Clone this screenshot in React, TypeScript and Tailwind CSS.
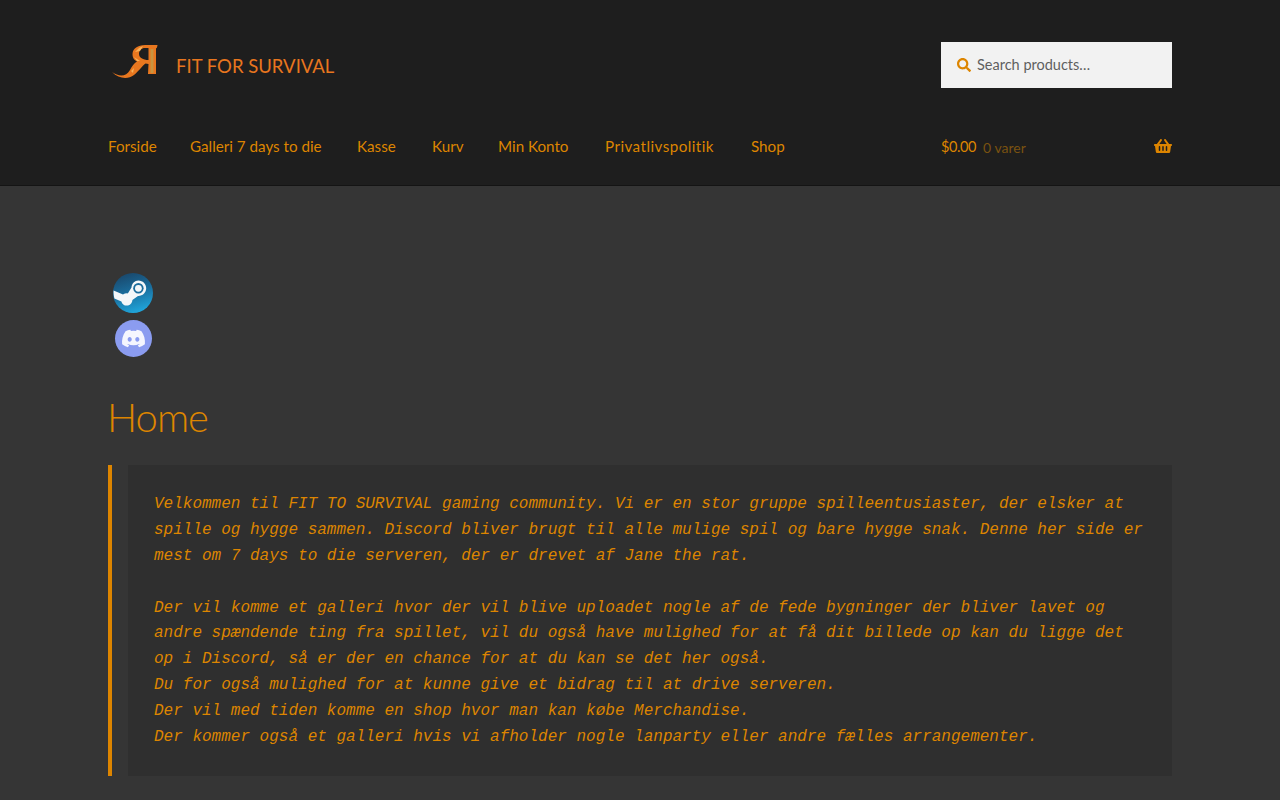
import { FaDiscord, FaSearch, FaShoppingBasket } from "react-icons/fa";

const menu = [
  { label: "Forside", className: "w-[82px]" },
  { label: "Galleri 7 days to die", className: "w-[167px]" },
  { label: "Kasse", className: "w-[75px]" },
  { label: "Kurv", className: "w-[66px]" },
  { label: "Min Konto", className: "w-[107px]" },
  { label: "Privatlivspolitik", className: "w-[146px] tracking-[0.45px]" },
  { label: "Shop", className: "" },
];

function Logo() {
  return (
    <div className="flex items-start w-[230px] h-[40px]">
      <svg width="48" height="38" viewBox="0 0 48 38" className="shrink-0">
        <path d="M0 28 C7 33 14 33 18 26 C20 22 22 19.5 25 17.5 C21.5 16 20.5 13 20.5 10 C20.5 4.5 26 1 33 1 L45.5 1 L45 3.5 L44 4.5 L44 30 L36 30 L36.5 20 L33.5 19.5 C30 22 27 27 22 31 C16 35.5 7 35 0 28 Z M36.5 4 L33 4 C29.5 4 27 6.5 27 10 C27 13.5 31 16 36.5 16 Z" fill="#e8771f" fillRule="evenodd" />
        <path d="M38.5 5 L41.5 5 L41.5 29 L38.5 29 Z" fill="#c9943f" />
        <path d="M23 8 L27 4 L31 2 L28 7 Z M22 13 L25 15 L28 17 L25 17 Z M19 27 L22 24 L21 29 Z" fill="#f6b25a" />
      </svg>
      <span className="font-['Lato',sans-serif] text-[18.5px] leading-[24px] text-[#e8761e] whitespace-nowrap ml-[16px] mt-[10px]">
        FIT FOR SURVIVAL
      </span>
    </div>
  );
}

function SteamIcon() {
  return (
    <svg width="40" height="40" viewBox="0 0 40 40" className="block">
      <defs>
        <linearGradient id="steamBg" x1="0.3" y1="0" x2="0.6" y2="1">
          <stop offset="0" stopColor="#19476b" />
          <stop offset="0.5" stopColor="#1a6f9f" />
          <stop offset="1" stopColor="#20a7dc" />
        </linearGradient>
      </defs>
      <circle cx="20" cy="20" r="20" fill="url(#steamBg)" />
      <path d="M0.6 17.5 L10 21.5 C11.5 20.6 13 20.2 14.8 20.4 L18.5 14.5 C18.7 10.3 21.8 7.4 25.4 7.4 C29.8 7.4 33.2 11 33.2 15.3 C33.2 19.8 29.4 23.2 25 23 L19.4 27 C19.2 30.2 16.8 32.6 13.8 32.6 C11 32.6 9 30.8 8.4 28.4 L1.4 25.4 C0.8 23 0.4 20 0.6 17.5 Z" fill="#f4f7f9" />
      <circle cx="25.4" cy="15.3" r="5.2" fill="#1c6d9d" />
      <circle cx="25.4" cy="15.3" r="3.4" fill="#f4f7f9" />
    </svg>
  );
}

function DiscordIcon() {
  return (
    <div className="w-[37px] h-[37px] rounded-full bg-[#8b9cf0] flex items-center justify-center">
      <FaDiscord className="w-[25px] h-[25px] text-[#f5f6fe]" />
    </div>
  );
}

export default function App() {
  return (
    <div className="min-h-[800px] h-[800px] overflow-hidden bg-[#353535] font-['Lato',sans-serif]">
      <header className="h-[186px] bg-[#1e1e1e] border-b border-[#141414]">
        <div className="w-[1064px] mx-auto">
          <div className="flex justify-between pt-[42px]">
            <div className="pl-[4px] pt-[2px]">
              <Logo />
            </div>
            <div className="w-[231px] h-[46px] bg-[#f2f2f2] flex items-center pl-[16px] gap-[6px]">
              <FaSearch className="w-[14px] h-[14px] text-[#dd8500]" />
              <span className="text-[14.5px] text-[#5f5f5f]">Search products…</span>
            </div>
          </div>
          <div className="flex justify-between items-center mt-[45px] h-[28px]">
            <nav className="flex items-center text-[15.2px] text-[#dd8500] -mt-[2px]">
              {menu.map((item) => (
                <span key={item.label} className={item.className}>
                  {item.label}
                </span>
              ))}
            </nav>
            <div className="w-[231px] flex items-center text-[#dd8500]">
              <span className="text-[14.5px] tracking-[-0.4px]">$0.00</span>
              <span className="text-[14px] ml-[7px] text-[#7a5210]">0 varer</span>
              <FaShoppingBasket className="w-[18px] h-[16px] ml-auto -translate-y-[1px]" />
            </div>
          </div>
        </div>
      </header>

      <main className="w-[1064px] mx-auto pt-[87px]">
        <div className="flex flex-col items-start pl-[5px] gap-[7px]">
          <SteamIcon />
          <div className="pl-[1.5px]">
            <DiscordIcon />
          </div>
        </div>
        <h1 className="mt-[34px] -ml-[1px] text-[40px] leading-[52px] tracking-[-1px] font-light text-[#dd8500]">
          Home
        </h1>
        <blockquote className="mt-[22px] border-l-4 border-[#dd8500] pl-[16px]">
          <div className="bg-[#2f2f2f] pl-[26px] pr-[20px] pt-[27px] pb-[25px] font-['Liberation_Mono',monospace] italic text-[16px] leading-[25.888px] text-[#dd8500] whitespace-nowrap">
            Velkommen til FIT TO SURVIVAL gaming community. Vi er en stor gruppe spilleentusiaster, der elsker at
            <br />
            spille og hygge sammen. Discord bliver brugt til alle mulige spil og bare hygge snak. Denne her side er
            <br />
            mest om 7 days to die serveren, der er drevet af Jane the rat.
            <br />
            <br />
            Der vil komme et galleri hvor der vil blive uploadet nogle af de fede bygninger der bliver lavet og
            <br />
            andre spændende ting fra spillet, vil du også have mulighed for at få dit billede op kan du ligge det
            <br />
            op i Discord, så er der en chance for at du kan se det her også.
            <br />
            Du for også mulighed for at kunne give et bidrag til at drive serveren.
            <br />
            Der vil med tiden komme en shop hvor man kan købe Merchandise.
            <br />
            Der kommer også et galleri hvis vi afholder nogle lanparty eller andre fælles arrangementer.
          </div>
        </blockquote>
      </main>
    </div>
  );
}
